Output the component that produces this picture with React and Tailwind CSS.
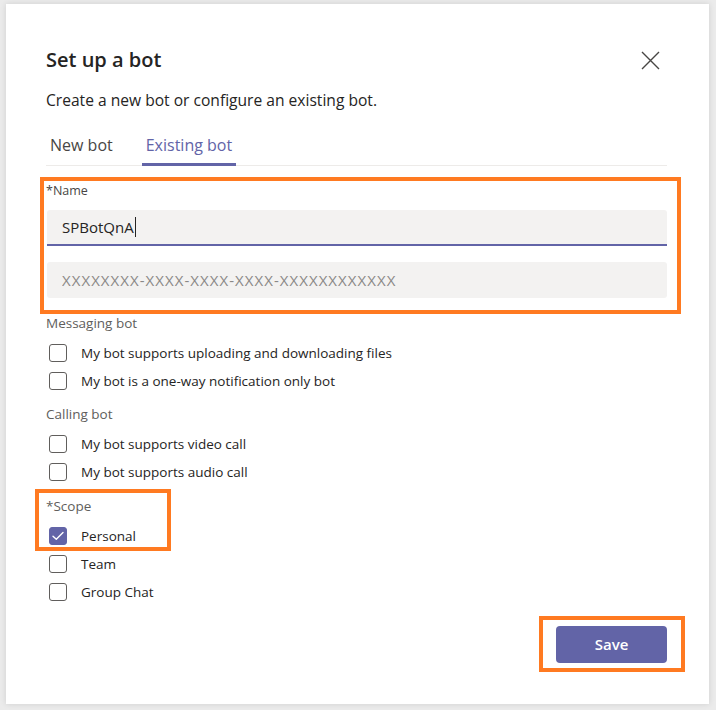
import React, { useState } from 'react';

const font = { fontFamily: '"Open Sans", "Noto Sans", "Liberation Sans", sans-serif' };

const Checkbox = ({ checked, label, onToggle }) => (
    <button type="button" onClick={onToggle} className="flex items-center h-[20px] text-left">
        <span
            className={`ml-[3px] w-[18px] h-[18px] rounded-[3px] flex items-center justify-center ${
                checked ? 'bg-[#6264a7] border border-[#6264a7]' : 'border border-[#605e5c] bg-white'
            }`}
        >
            {checked && (
                <svg width="12" height="10" viewBox="0 0 12 10" fill="none">
                    <path d="M1 5.2 L4.3 8.3 L11 1.5" stroke="white" strokeWidth="1.4" strokeLinecap="round" strokeLinejoin="round" />
                </svg>
            )}
        </span>
        <span className="ml-[14px] text-[13.5px] text-[#252423]">{label}</span>
    </button>
);

const App = () => {
    const [tab, setTab] = useState('existing');
    const [name, setName] = useState('SPBotQnA');
    const [checks, setChecks] = useState({
        files: false,
        notify: false,
        video: false,
        audio: false,
        personal: true,
        team: false,
        group: false,
    });

    const toggle = (key) => setChecks((prev) => ({ ...prev, [key]: !prev[key] }));

    return (
        <div className="min-h-[710px] bg-[#ebebeb] pt-[4px] pl-[6px]" style={font}>
            <div className="w-[703px] h-[700px] bg-white shadow-[0_0_6px_rgba(0,0,0,0.12)] pt-[42px] pl-[40px] pr-[42px]">
                {/* header */}
                <div className="flex items-center justify-between h-[28px]">
                    <h1 className="text-[20px] font-semibold text-[#252423] leading-[28px]">Set up a bot</h1>
                    <button type="button" className="mr-[7px]">
                        <svg width="19" height="19" viewBox="0 0 19 19">
                            <path d="M1 1 L18 18 M18 1 L1 18" stroke="#484644" strokeWidth="1.4" />
                        </svg>
                    </button>
                </div>
                <p className="mt-[16px] text-[15.6px] leading-[20px] text-[#252423]">
                    Create a new bot or configure an existing bot.
                </p>

                {/* tabs */}
                <div className="mt-[25px] flex border-b border-[#edebe9]">
                    <button
                        type="button"
                        onClick={() => setTab('new')}
                        className={`px-[4px] pb-[7px] text-[16px] leading-[21px] border-b-[3px] mb-[-1px] ${
                            tab === 'new' ? 'text-[#6264a7] border-[#6264a7]' : 'text-[#484644] border-transparent'
                        }`}
                    >
                        New bot
                    </button>
                    <button
                        type="button"
                        onClick={() => setTab('existing')}
                        className={`ml-[25px] px-[4px] pb-[7px] text-[16px] leading-[21px] border-b-[3px] mb-[-1px] ${
                            tab === 'existing' ? 'text-[#6264a7] border-[#6264a7]' : 'text-[#484644] border-transparent'
                        }`}
                    >
                        Existing bot
                    </button>
                </div>

                {/* name */}
                <div className="relative mt-[17px]">
                    <div className="text-[12.5px] leading-[16px] text-[#484644]">*Name</div>
                    <div className="mt-[11px] ml-[1px] h-[36px] bg-[#f3f2f1] rounded-t-[3px] border-b-2 border-[#6264a7] flex items-center px-[15px]">
                        <span className="text-[15px] text-[#252423]">{name}</span>
                        <span className="ml-[1px] w-[1px] h-[20px] bg-[#252423]" />
                    </div>
                    <div className="mt-[16px] ml-[1px] h-[36px] bg-[#f3f2f1] rounded-[3px] flex items-center px-[15px]">
                        <input
                            placeholder="XXXXXXXX-XXXX-XXXX-XXXX-XXXXXXXXXXXX"
                            className="w-full bg-transparent outline-none text-[15px] text-[#252423] placeholder:text-[#8a8886] placeholder:tracking-[1.05px]"
                        />
                    </div>
                    <div className="absolute left-[-6px] right-[-14px] top-[-6px] bottom-[-16px] border-4 border-[#ff7a21] pointer-events-none" />
                </div>

                {/* messaging */}
                <div className="mt-[16px] text-[13.5px] leading-[18px] text-[#605e5c]">Messaging bot</div>
                <div className="mt-[11px] flex flex-col gap-[8px]">
                    <Checkbox checked={checks.files} onToggle={() => toggle('files')} label="My bot supports uploading and downloading files" />
                    <Checkbox checked={checks.notify} onToggle={() => toggle('notify')} label="My bot is a one-way notification only bot" />
                </div>

                {/* calling */}
                <div className="mt-[14px] text-[13.5px] leading-[18px] text-[#605e5c]">Calling bot</div>
                <div className="mt-[11px] flex flex-col gap-[8px]">
                    <Checkbox checked={checks.video} onToggle={() => toggle('video')} label="My bot supports video call" />
                    <Checkbox checked={checks.audio} onToggle={() => toggle('audio')} label="My bot supports audio call" />
                </div>

                {/* scope */}
                <div className="relative mt-[15px]">
                    <div className="text-[13.5px] leading-[18px] text-[#605e5c]">*Scope</div>
                    <div className="mt-[11px]">
                        <Checkbox checked={checks.personal} onToggle={() => toggle('personal')} label="Personal" />
                    </div>
                    <div className="absolute left-[-11px] top-[-8px] w-[136px] h-[62px] border-4 border-[#ff7a21] pointer-events-none" />
                </div>
                <div className="mt-[8px] flex flex-col gap-[8px]">
                    <Checkbox checked={checks.team} onToggle={() => toggle('team')} label="Team" />
                    <Checkbox checked={checks.group} onToggle={() => toggle('group')} label="Group Chat" />
                </div>

                {/* footer */}
                <div className="mt-[24px] flex justify-end">
                    <div className="relative">
                        <button
                            type="button"
                            className="w-[111px] h-[37px] rounded-[4px] bg-[#6264a7] text-white text-[15px] font-semibold"
                        >
                            Save
                        </button>
                        <div className="absolute left-[-17px] right-[-18px] top-[-10px] bottom-[-9px] border-4 border-[#ff7a21] pointer-events-none" />
                    </div>
                </div>
            </div>
        </div>
    );
};

export default App;
